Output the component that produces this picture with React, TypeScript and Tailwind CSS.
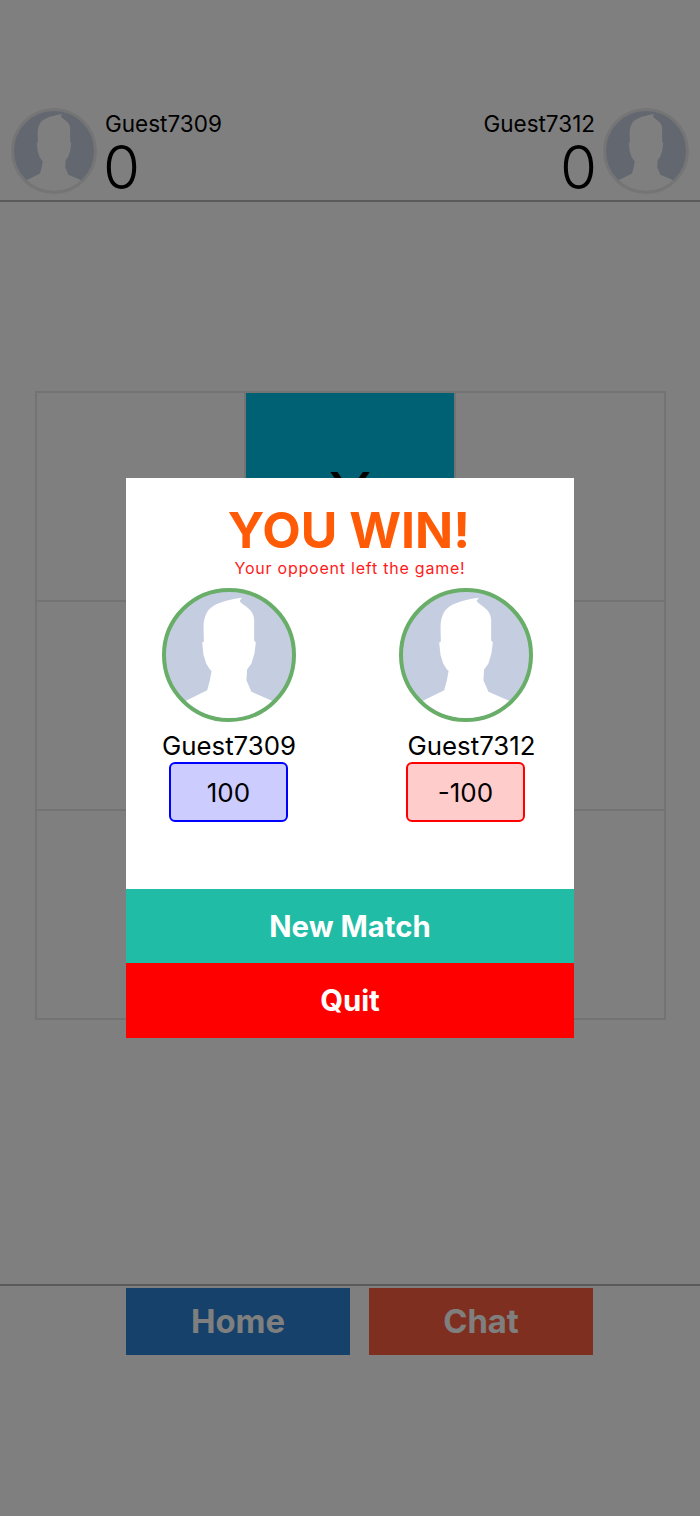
const font = { fontFamily: "Inter, sans-serif" };

function Avatar({ size, ringClass, viewBox }: { size: string; ringClass: string; viewBox: string }) {
  return (
    <div className={`${size} ${ringClass} shrink-0 overflow-hidden rounded-full bg-[#c5cee0]`}>
      <svg viewBox={viewBox} className="h-full w-full">
        <path
          fill="#ffffff"
          d="M239 29 C205 33 170 42 150 56 C132 68 125 90 124 115 L125 160 L120 163 L124 200 L132 225 L142 242 L148 248 L143 275 L135 305 L70 337 L10 367 L10 400 L390 400 L390 367 L330 337 L267 310 L252 275 L254 243 L267 225 L276 195 L280 163 L275 157 L275 95 C274 82 270 74 263 66 C255 57 243 50 237 45 C233 41 232 38 232 37 Z"
        />
      </svg>
    </div>
  );
}

function PlayerResult({ name, score, win, nameClass }: { name: string; score: string; win: boolean; nameClass?: string }) {
  return (
    <div className="flex w-[134px] flex-col items-center">
      <Avatar size="h-[134px] w-[134px]" ringClass="border-[4px] border-[#69ae68]" viewBox="12 12 376 376" />
      <div className={`mt-[8px] text-[25.8px] leading-[32px] whitespace-nowrap text-black ${nameClass ?? ""}`}>{name}</div>
      <div
        className={`ml-[7px] flex h-[60px] w-[119px] items-center justify-center self-start rounded-[6px] border-2 text-[26px] text-black ${
          win ? "border-[#0000ff] bg-[#ccccff]" : "border-[#ff0000] bg-[#ffcccc]"
        }`}
      >
        {score}
      </div>
    </div>
  );
}

function Cell({ active, mark }: { active?: boolean; mark?: string }) {
  return (
    <div
      className={`flex items-center justify-center border border-[#e6e6e6] text-[66px] font-normal text-black ${
        active ? "bg-[#00c2e8] bg-clip-content" : ""
      }`}
    >
      {mark}
    </div>
  );
}

export default function App() {
  return (
    <div className="relative flex h-[1516px] w-[700px] flex-col overflow-hidden bg-white" style={font}>
      <header className="flex h-[202px] items-start justify-between border-b-2 border-[#b4b4b4] px-[11px] pt-[108px]">
        <div className="flex gap-[8px]">
          <Avatar size="h-[86px] w-[86px]" ringClass="border-[3px] border-[#ebebeb]" viewBox="14 14 372 372" />
          <div className="flex flex-col text-left">
            <div className="mt-[1px] text-[22.5px] leading-[30px] text-black">Guest7309</div>
            <div className="ml-[-2px] text-[60px] leading-[57px] font-light text-black">0</div>
          </div>
        </div>
        <div className="flex gap-[8px]">
          <div className="flex flex-col items-end">
            <div className="mt-[1px] text-[22.5px] leading-[30px] text-black">Guest7312</div>
            <div className="mr-[-2px] text-[60px] leading-[57px] font-light text-black">0</div>
          </div>
          <Avatar size="h-[86px] w-[86px]" ringClass="border-[3px] border-[#ebebeb]" viewBox="14 14 372 372" />
        </div>
      </header>

      <main className="flex h-[1082px] items-start pt-[189px] pl-[35px]">
        <div className="grid h-[629px] w-[631px] grid-cols-[209px_210px_210px] grid-rows-3 border border-[#e6e6e6]">
          <Cell />
          <Cell active mark="X" />
          <Cell />
          <Cell />
          <Cell />
          <Cell />
          <Cell />
          <Cell />
          <Cell />
        </div>
      </main>

      <footer className="flex gap-[19px] border-t-2 border-[#b4b4b4] pt-[2px] pl-[126px]">
        <button className="h-[67px] w-[224px] bg-[#2c82d6] text-[32.8px] font-bold text-white">Home</button>
        <button className="h-[67px] w-[224px] bg-[#fe5e3e] text-[32.8px] font-bold text-white">Chat</button>
      </footer>

      <div className="absolute inset-0 flex items-center justify-center bg-black/50">
        <div className="flex h-[560px] w-[448px] flex-col bg-white">
          <div className="flex h-[411px] flex-col items-center">
            <div className="mt-[22px] mr-[2px] text-[50px] leading-[60px] font-bold text-[#ff5a05]">YOU WIN!</div>
            <div className="mt-[-1px] text-[16px] leading-[18px] tracking-[0.77px] text-[#ff1a1a]">Your oppoent left the game!</div>
            <div className="mt-[11px] flex w-full gap-[103px] pl-[36px]">
              <PlayerResult name="Guest7309" score="100" win />
              <PlayerResult name="Guest7312" score="-100" win={false} nameClass="ml-[11px]" />
            </div>
          </div>
          <button className="h-[74px] bg-[#20bca6] pt-[1px] text-[29.3px] font-bold text-white">New Match</button>
          <button className="h-[75px] bg-[#ff0000] text-[29.3px] font-bold text-white">Quit</button>
        </div>
      </div>
    </div>
  );
}
